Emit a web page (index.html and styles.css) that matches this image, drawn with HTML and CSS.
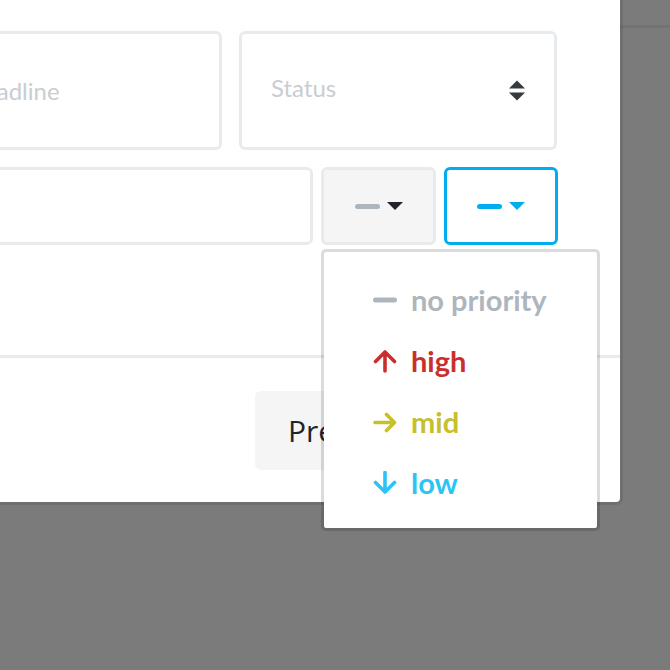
FILE: index.html
```html
<html>
<head>
    <meta charset="utf-8"/>
    <title>New task</title>
    <link rel="stylesheet" href="styles.css">
</head>
<body>
<div class="page-header"></div>

<div class="modal">
    <div class="modal-body">
        <div class="row">
            <div class="field">
                <span class="placeholder">Assignee</span>
            </div>
            <div class="field date">
                <svg class="cal" width="22" height="22" viewBox="0 0 24 24" fill="none" stroke="#c8cdd2" stroke-width="2">
                    <rect x="3" y="5" width="18" height="16" rx="2"/>
                    <path d="M3 10h18M8 3v4M16 3v4"/>
                </svg>
                <span class="placeholder">Deadline</span>
            </div>
            <div class="field select">
                <span class="placeholder status">Status</span>
                <svg width="16" height="21" viewBox="0 0 16 21">
                    <path d="M8 0.5L16 8.5H0z" fill="#343a40"/>
                    <path d="M0 12.5H16L8 20.5z" fill="#343a40"/>
                </svg>
            </div>
        </div>
        <div class="row row-small">
            <div class="field title"></div>
            <div class="prio-group">
                <div class="prio-btn">
                    <span class="dash"></span><span class="caret"></span>
                </div>
                <div class="prio-btn active">
                    <span class="dash"></span><span class="caret"></span>
                </div>

                <!-- open menu -->
                <ul class="prio-menu">
                    <li class="none">
                        <svg width="24" height="24" viewBox="0 0 24 24"><rect x="0" y="9.5" width="24" height="5" rx="2.5" fill="#adb5bd"/></svg>
                        no priority
                    </li>
                    <li class="high">
                        <svg width="24" height="24" viewBox="0 0 24 24" fill="none" stroke="#c9302c" stroke-width="3.6" stroke-linecap="round" stroke-linejoin="round">
                            <path d="M12 22V3.5M2.5 12.5L12 3l9.5 9.5"/>
                        </svg>
                        high
                    </li>
                    <li class="mid">
                        <svg width="24" height="24" viewBox="0 0 24 24" fill="none" stroke="#c6c02c" stroke-width="3.6" stroke-linecap="round" stroke-linejoin="round">
                            <path d="M2 12.5h19M13.5 4.5l8 8-8 8"/>
                        </svg>
                        mid
                    </li>
                    <li class="low">
                        <svg width="24" height="24" viewBox="0 0 24 24" fill="none" stroke="#2bc4f5" stroke-width="3.6" stroke-linecap="round" stroke-linejoin="round">
                            <path d="M12 1.5V21M2.5 11.5L12 21l9.5-9.5"/>
                        </svg>
                        low
                    </li>
                </ul>
            </div>
        </div>
    </div>
    <div class="modal-footer">
        <button class="btn">Preview</button>
        <button class="btn">Save</button>
    </div>
</div>
</body>
</html>
```

FILE: styles.css
```css
body {
    margin: 0;
    background: #7b7b7b;
    font-family: Lato, "Open Sans", sans-serif;
    overflow: hidden;
}

.page-header {
    height: 25px;
    border-bottom: 3px solid #737373;
}

.modal {
    position: absolute;
    left: -493px;
    top: -10px;
    width: 1113px;
    background: #fff;
    border-radius: 4px;
    box-shadow: 0 0 0 3px rgba(0, 0, 0, 0.09);
}

.modal-body {
    padding: 41px 62px 110px 62px;
}

.row {
    display: flex;
    gap: 17px;
}

.row-small {
    margin-top: 17px;
    gap: 8px;
}

.field {
    box-sizing: border-box;
    width: 318px;
    height: 119px;
    border: 3px solid #e8ebee;
    border-radius: 6px;
    display: flex;
    align-items: center;
    padding: 0 29px;
    background: #fff;
}

.placeholder {
    font-size: 24px;
    color: #c8cdd2;
    flex: 1;
}

.placeholder.status {
    margin-bottom: 6px;
}

.date {
    gap: 8px;
}

.date .cal {
    flex: none;
}

.select svg {
    flex: none;
}

.title {
    flex: 1;
    width: auto;
    height: 78px;
}

.prio-group {
    position: relative;
    display: flex;
    gap: 8px;
}

.prio-btn {
    box-sizing: border-box;
    width: 115px;
    height: 78px;
    border: 3px solid #e8ebee;
    border-radius: 6px;
    background: #f5f5f5;
    display: flex;
    align-items: center;
    justify-content: center;
    gap: 7px;
}

.prio-btn .dash {
    width: 25px;
    height: 5px;
    border-radius: 3px;
    background: #adb5bd;
}

.prio-btn .caret {
    width: 0;
    height: 0;
    border-left: 8px solid transparent;
    border-right: 8px solid transparent;
    border-top: 8px solid #212529;
}

.prio-btn.active {
    width: 114px;
    background: #fff;
    border-color: #00aeef;
}

.prio-btn.active .dash {
    background: #00aeef;
}

.prio-btn.active .caret {
    border-top-color: #00aeef;
}

.prio-menu {
    position: absolute;
    left: 0;
    top: 82px;
    box-sizing: border-box;
    width: 279px;
    margin: 0;
    padding: 17px 0 15px 0;
    list-style: none;
    background: #fff;
    border: 3px solid rgba(0, 0, 0, 0.14);
    border-radius: 5px;
    background-clip: padding-box;
    z-index: 2;
}

.prio-menu li {
    height: 61px;
    display: flex;
    align-items: center;
    gap: 14px;
    padding-left: 49px;
    font-size: 29px;
    font-weight: bold;
}

.prio-menu li svg {
    flex: none;
}

.none {
    color: #adb5bd;
}

.high {
    color: #c9302c;
}

.mid {
    color: #c6c02c;
}

.low {
    color: #2bc4f5;
}

.modal-footer {
    border-top: 3px solid #e8ebee;
    padding: 33px 0 32px 748px;
    display: flex;
    gap: 10px;
}

.btn {
    height: 79px;
    padding: 0 33px;
    border: 0;
    border-radius: 6px;
    background: #f5f5f5;
    color: #212529;
    font-family: "Open Sans", sans-serif;
    font-size: 30px;
}
```
